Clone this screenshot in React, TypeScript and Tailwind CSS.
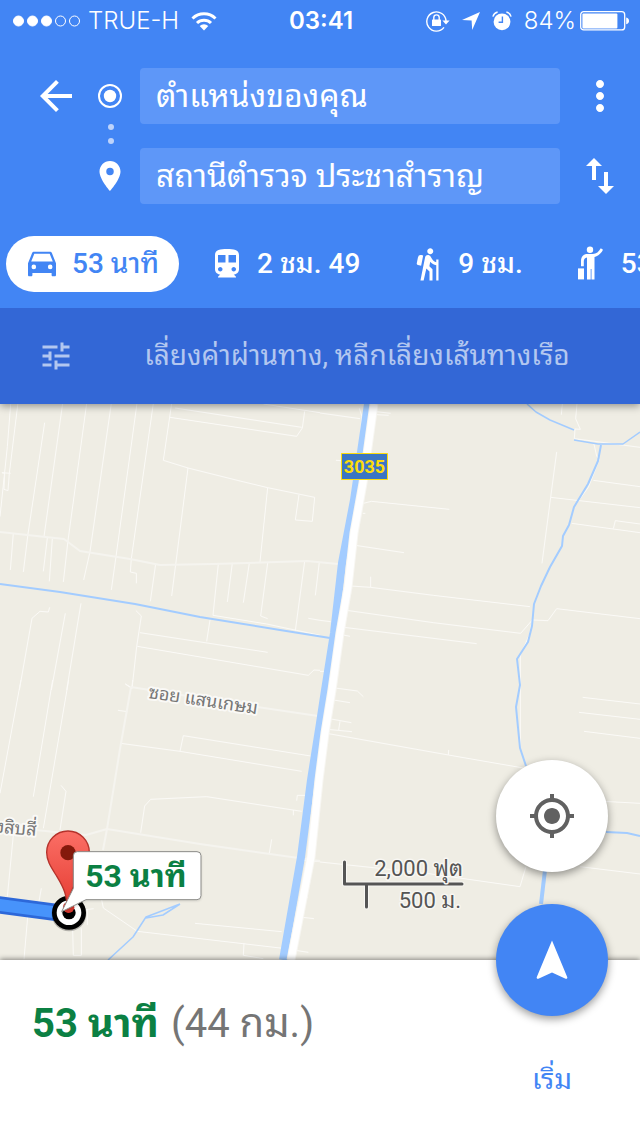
import type { ReactNode } from 'react'
import {
  MdArrowBack,
  MdDirectionsSubway,
  MdHiking,
  MdMoreVert,
  MdMyLocation,
  MdPlace,
  MdSwapVert,
  MdTune,
} from 'react-icons/md'
import { clsx } from 'clsx'

const HAIRLINES = {
  nw: [
    'M33 0L22 140 0 350',
    'M55 0L28 220 24 272 12 268 14 220 6 218 32 220',
    'M134 68L84 402 70 516',
    'M188 10L132 410',
    'M260 10L204 422 190 546',
    'M334 10L270 455 251 540',
    'M411 10L348 470 334 570',
    'M460 10L394 476 391 516 409 520 409 550',
    'M515 10L490 181 564 204 720 243 803 263 944 292 937 364 886 360 897 284',
    'M510 52L890 109 907 84 914 34',
    'M525 24L905 82',
    'M790 12L960 38',
    'M564 204L527 494 515 588',
    'M803 263L780 486',
    'M40 400L31 510',
    'M142 414L130 514',
    'M157 416L148 544',
    'M467 492L451 604',
    'M655 492L639 646 800 672 960 706',
    'M697 489L682 606',
    'M748 489L730 608',
    'M803 489L782 648 803 656',
    'M914 484L886 692',
    'M958 486L946 586',
    'M925 655L960 661',
    'M58 870L96 655 120 634 145 636 149 622',
    'M154 870L196 640',
    'M200 870L243 610',
    'M408 632L424 648 410 740 396 866 376 852',
    'M420 698L803 757',
    'M412 739L925 826 942 810 960 811',
    'M630 660L620 724',
  ],
  ne: [
    'M0 39L120 56',
    'M118 25L126 50 104 300 80 560 58 700 20 860',
    'M170 35L212 40M170 44L206 46',
    'M48 181L64 182',
    'M710 156L692 292 666 490',
    'M727 12L724 44',
    'M771 12L767 56 781 88 765 87 763 116 960 142',
    'M822 132L830 168 838 178 805 262 770 310',
    'M820 241L960 260',
    'M692 292L960 323',
    'M755 370L960 398',
    'M880 386L886 362 960 372',
    'M130 310L154 304 388 328',
    'M128 340L136 340',
    'M106 436L252 458',
    'M92 558L152 562 152 530M152 562L340 586 630 620',
    'M80 631L340 668 602 700 637 660 684 662 710 626 960 656',
    'M72 682L470 731',
    'M70 705L90 709',
    'M637 662L628 705 601 765 601 870',
    'M0 661L32 665M0 814L14 814',
  ],
  sw: [
    'M63 0L0 340',
    'M158 0L100 350',
    'M206 0L130 445',
    'M376 12L396 24 398 0',
    'M354 91L382 95',
    'M362 190L540 214 905 274',
    'M540 214L550 167 932 228',
    'M422 458L434 378 452 358 620 350 905 394M880 406L880 390',
    'M890 362L892 346 915 346',
    'M183 316L198 334 180 450',
    'M808 520L815 478',
    'M40 465L22 650',
    'M84 700L72 838',
    'M124 625L116 670',
    'M218 750L220 826 244 826 244 745',
    'M302 645L310 684 412 754 840 804 925 817',
    'M585 730L845 755',
    'M732 790L730 826 790 836',
    'M900 650L924 652M900 711L942 716',
    'M890 540L960 545',
    'M250 690L281 686M262 690L262 735',
  ],
  se: [
    'M45 24L112 33 130 50',
    'M40 60L90 68',
    'M28 116L94 128M60 124L56 150',
    'M22 148L96 155',
    'M20 160L385 225 610 264M385 225L386 210',
    'M601 0L601 208 616 252',
    'M788 52L960 72',
    'M777 97L960 118',
    'M792 154L960 175',
    'M0 546L320 580 600 620 618 560',
    'M780 560L960 582',
    'M850 364L960 370',
  ],
}

const TILES = [
  { lines: HAIRLINES.nw, transform: 'translate(0 -4) scale(.33333)' },
  { lines: HAIRLINES.ne, transform: 'translate(320 -4) scale(.33333)' },
  { lines: HAIRLINES.sw, transform: 'translate(0 276) scale(.33333)' },
  { lines: HAIRLINES.se, transform: 'translate(320 276) scale(.33333)' },
]

const HIGHWAY = 'M374 0L363 79 354 129 348 183 340 229 332 286 325 329 319 376 311 453 291 556'

function StatusBar() {
  return (
    <div className="flex h-[42px] items-center pl-3 pr-[10px] font-[Inter,sans-serif] text-2xl text-white">
      <div className="flex flex-1 items-center">
        <svg width="68" height="12" viewBox="0 0 68 12" fill="white" stroke="white">
          <circle cx="6.5" cy="6" r="5" />
          <circle cx="20.5" cy="6" r="5" />
          <circle cx="34.5" cy="6" r="5" />
          <circle cx="48.5" cy="6" r="5" fill="none" />
          <circle cx="62.5" cy="6" r="5" fill="none" />
        </svg>
        <span className="ml-2 font-light">TRUE-H</span>
        <svg className="ml-3" width="26" height="19" viewBox="0 0 26 19" fill="none" stroke="white" strokeWidth="3">
          <path d="M1.5 6.5a16.5 16.5 0 0 1 23 0M6 11a10 10 0 0 1 14 0" />
          <path d="M13 18.5l-4.3-4.4a6.2 6.2 0 0 1 8.6 0z" fill="white" stroke="none" />
        </svg>
      </div>
      <span className="font-semibold">03:41</span>
      <div className="flex flex-1 items-center justify-end">
        <svg width="24" height="22" viewBox="0 0 24 22" fill="none" stroke="white">
          <path d="M18 17.4A9.6 9.6 0 1 1 20 11" strokeWidth="1.4" />
          <path d="M16.4 10.6h7.2L20 14.6z" fill="white" stroke="none" />
          <rect x="6" y="9.4" width="9" height="6.6" rx=".6" fill="white" stroke="none" />
          <path d="M7.8 10V7.6a2.7 2.7 0 0 1 5.4 0V10" strokeWidth="1.4" />
        </svg>
        <svg className="ml-3" width="18" height="18" viewBox="0 0 18 18" fill="white">
          <path d="M18 0L0 8.1l9.6.4.6 9.5z" />
        </svg>
        <svg className="ml-3" width="20" height="20" viewBox="0 0 20 20">
          <circle cx="10" cy="10.8" r="8.4" fill="white" />
          <path d="M.9 5.6A6.5 6.5 0 0 1 5.6 1M14.4 1a6.5 6.5 0 0 1 4.7 4.6" fill="none" stroke="white" strokeWidth="1.4" />
          <path d="M10.4 5.4v5.8H6.6" fill="none" stroke="#4285f4" strokeWidth="1.4" />
        </svg>
        <span className="ml-3 font-light">84%</span>
        <svg className="ml-1" width="50" height="20" viewBox="0 0 50 20">
          <rect x=".7" y=".7" width="44" height="18.2" rx="3" fill="none" stroke="white" strokeWidth="1.3" />
          <rect x="2.4" y="2.4" width="35" height="15" rx="1" fill="white" />
          <path d="M46.2 6.4c3.8.6 3.8 6.2 0 6.8z" fill="white" />
        </svg>
      </div>
    </div>
  )
}

function WaypointField({ label, value }: { label: string; value: string }) {
  return (
    <input
      type="text"
      aria-label={label}
      defaultValue={value}
      className="h-14 w-full min-w-0 rounded bg-[#5e97f8] px-4 text-[32px] leading-[56px] text-white outline-none"
    />
  )
}

function RouteForm() {
  return (
    <form className="grid grid-cols-[48px_36px_1fr_52px] items-center gap-x-3 pl-8 pr-4 pt-[26px]">
      <button type="button" aria-label="Back">
        <MdArrowBack size={48} />
      </button>
      <svg className="mx-auto" width="24" height="24" viewBox="0 0 24 24">
        <circle cx="12" cy="12" r="11" fill="none" stroke="white" strokeWidth="2" />
        <circle cx="12" cy="12" r="6.2" fill="white" />
      </svg>
      <WaypointField label="From" value="ตำแหน่งของคุณ" />
      <button type="button" aria-label="More" className="justify-self-end">
        <MdMoreVert size={48} />
      </button>

      <svg className="col-span-3 col-start-2 ml-4" width="6" height="24" viewBox="0 0 6 24" fill="#bdd3fb">
        <circle cx="3" cy="3" r="3" />
        <circle cx="3" cy="17" r="3" />
      </svg>

      <MdPlace className="col-start-2" size={36} />
      <WaypointField label="To" value="สถานีตำรวจ ประชาสำราญ" />
      <button type="button" aria-label="Swap" className="justify-self-end">
        <MdSwapVert size={48} />
      </button>
    </form>
  )
}

function CarIcon() {
  return (
    <svg width="36" height="36" viewBox="0 0 36 36" fill="currentColor" fillRule="evenodd">
      <path d="M10.2 5.7h15.6c1 0 1.8.5 2.1 1.4L32 17.2V29c0 .8-.5 1.3-1.2 1.3h-2c-.8 0-1.2-.5-1.2-1.3v-2H8.4v2c0 .8-.4 1.3-1.2 1.3h-2c-.7 0-1.2-.5-1.2-1.3V17.2L8.1 7.1c.3-.9 1.1-1.4 2.1-1.4zM10.3 7.8L7.2 15.6h21.6l-3.1-7.8zM9.8 18.6a2.3 2.3 0 1 0 0 4.6 2.3 2.3 0 0 0 0-4.6zM26.2 18.6a2.3 2.3 0 1 0 0 4.6 2.3 2.3 0 0 0 0-4.6z" />
    </svg>
  )
}

function HailIcon() {
  return (
    <svg width="36" height="36" viewBox="0 0 36 36" fill="currentColor">
      <circle cx="17" cy="3.8" r="3.2" />
      <path d="M5 22.4h6v11H5z" />
      <path d="M8 20.2v-5c0-5 2.8-7.2 6.5-7.2h5.3c3.6 0 6-2.2 8-5.7l2.2 1.4c-1.7 3.4-4.4 6.2-8.5 7.3v22.4h-3V23h-.8v10.4H14V11.6c-2.2.3-3.2 1.6-3.2 4v4.6z" />
    </svg>
  )
}

interface ModeTabProps {
  icon: ReactNode
  label: string
  active?: boolean
}

function ModeTab({ icon, label, active }: ModeTabProps) {
  return (
    <button
      type="button"
      className={clsx(
        'flex h-14 shrink-0 items-center gap-3 whitespace-nowrap rounded-full pl-[18px] pr-5 text-[28px] font-medium leading-10',
        active ? 'bg-white text-[#4285f4]' : 'text-white',
      )}
    >
      {icon}
      <span>{label}</span>
    </button>
  )
}

function MapCanvas() {
  return (
    <svg
      className="absolute inset-0 h-full w-full"
      viewBox="0 0 640 556"
      preserveAspectRatio="xMidYMid slice"
      fill="none"
      strokeLinejoin="round"
    >
      {TILES.map(({ lines, transform }) => (
        <g key={transform} transform={transform} stroke="#fbfaf7" strokeWidth="3">
          {lines.map((d) => (
            <path key={d} d={d} />
          ))}
        </g>
      ))}

      {/* side roads */}
      <g stroke="#f5f4ef" strokeWidth="2">
        <path d="M0 128L64 135 80 147 130 155 160 161 213 160 307 157 338 160" />
        <path d="M131 283L120 345 107 425 103 446M131 283L250 302 318 312M35 426L86 431 107 425 200 440 320 457" />
      </g>

      {/* streams */}
      <g stroke="#a3ccff" strokeWidth="1.5">
        <path d="M0 180L60 188 135 200 200 213 280 226 330 234" strokeWidth="2" />
        <path d="M527 0L536 8 550 16 574 26M574 36L598 40 623 40 640 28" />
        <path d="M601 41L598 57 588 80 574 103 569 121 563 132 562 142 550 163 541 182 534 200 532 222 528 238 517 255 520 281 516 303 520 344 526 362" strokeWidth="2" />
        <path d="M606 428L627 429 640 432" strokeWidth="2" />
        <path d="M545 466L541 500" strokeWidth="4" />
        <path d="M108 556L133 533 146 513 180 500M146 514L163 511 180 500" />
      </g>

      {/* canal and highway */}
      <path
        d="M368 0L354 96 342 159 334 229 325 286 320 319 311 376 301 453 283 556"
        stroke="#a3ccff"
        strokeWidth="8"
      />
      <path d={HIGHWAY} stroke="#f8f7f3" strokeWidth="9" />
      <path d={HIGHWAY} stroke="white" strokeWidth="7" />

      <rect x="341.5" y="49.5" width="46" height="26" fill="#3b76c4" stroke="#fddc0b" />
      <text x="364.5" y="69" textAnchor="middle" fontSize="18" fontWeight="700" fill="#fddc0b">
        3035
      </text>

      <g fontSize="18" fill="#777" stroke="#faf9f6" strokeWidth="4" paintOrder="stroke">
        <text x="148" y="294" transform="rotate(8.5 148 294)">ซอย แสนเกษม</text>
        <text x="36" y="432" textAnchor="end" transform="rotate(5 36 432)">งสิบสี่</text>
      </g>

      {/* route end */}
      <g transform="translate(0 276) scale(.33333)">
        <path d="M-6 674L190 700" stroke="#2d68d9" strokeWidth="52" />
        <path d="M-6 674L190 700" stroke="#4793fb" strokeWidth="36" />
        <circle cx="207" cy="702" r="52" fill="rgba(0,0,0,.25)" />
        <circle cx="207" cy="698" r="44" fill="white" stroke="black" strokeWidth="14" />
        <circle cx="207" cy="698" r="20" fill="black" />
        <path
          d="M204 696c-5-54-10-68-33-106-18-29-31-47-31-73a64 64 0 0 1 128 0c0 26-13 44-31 73-23 38-28 52-33 106z"
          fill="url(#pin)"
          stroke="#b5322b"
          strokeWidth="4"
        />
        <circle cx="204" cy="518" r="23" fill="#84190c" />
        <circle cx="206" cy="682" r="17" fill="#d2382f" />
        <path
          d="M232 515H591a12 12 0 0 1 12 12V647a12 12 0 0 1-12 12H258L185 695 220 625V527a12 12 0 0 1 12-12z"
          fill="white"
          stroke="#8b8b88"
          strokeWidth="3"
          className="drop-shadow-md"
        />
      </g>
      <text x="136" y="483" textAnchor="middle" fontSize="32" fontWeight="700" fill="#0b8043">
        53 นาที
      </text>

      {/* scale */}
      <path d="M344.5 458V480H462M366.5 481V503" stroke="#f8f7f3" strokeWidth="5" strokeLinecap="round" />
      <path d="M344.5 458V480H462M366.5 481V503" stroke="#555" strokeWidth="3" strokeLinecap="round" />
      <g fontSize="22" fill="#555" stroke="#f8f7f3" strokeWidth="3" paintOrder="stroke" textAnchor="end">
        <text x="463" y="472">2,000 ฟุต</text>
        <text x="461" y="504">500 ม.</text>
      </g>

      <defs>
        <linearGradient id="pin" x1="0" y1="0" x2="0" y2="1">
          <stop offset="0" stopColor="#fb6f66" />
          <stop offset="1" stopColor="#e4392f" />
        </linearGradient>
      </defs>
    </svg>
  )
}

export default function App() {
  return (
    <div className="flex min-h-screen flex-col overflow-hidden bg-white font-[Roboto,'Noto_Sans_Thai_Looped','Noto_Looped_Thai',Loma,Garuda,Waree,'Noto_Sans',sans-serif]">
      <header className="relative z-10 shadow-[0_2px_8px_rgba(0,0,0,0.4)]">
        <div className="bg-[#4285f4] pb-4 text-white">
          <StatusBar />
          <RouteForm />
          <nav className="mt-8 flex gap-3 overflow-hidden pl-[6px]">
            <ModeTab active icon={<CarIcon />} label="53 นาที" />
            <ModeTab icon={<MdDirectionsSubway size={36} />} label="2 ชม. 49" />
            <ModeTab icon={<MdHiking size={36} />} label="9 ชม." />
            <ModeTab icon={<HailIcon />} label="53 นาที" />
          </nav>
        </div>
        <button type="button" className="flex h-24 w-full items-center bg-[#3367d6] pl-[38px] text-[#b3c7f0]">
          <MdTune size={36} />
          <span className="flex-1 whitespace-nowrap text-center text-[28px] leading-10">
            เลี่ยงค่าผ่านทาง, หลีกเลี่ยงเส้นทางเรือ
          </span>
        </button>
      </header>

      <main className="relative flex-1 overflow-hidden bg-[#efede4]">
        <MapCanvas />
        <button
          type="button"
          aria-label="My location"
          className="absolute bottom-[88px] right-8 flex size-28 items-center justify-center rounded-full bg-white text-[#616161] shadow-[0_3px_8px_rgba(0,0,0,0.4)]"
        >
          <MdMyLocation size={48} />
        </button>
      </main>

      <footer className="relative flex h-44 justify-between bg-white px-8 shadow-[0_-1px_5px_rgba(0,0,0,0.45)]">
        <p className="pt-8 text-[40px] leading-[64px] text-[#757575]">
          <strong className="mr-3 font-bold text-[#0b8043]">53 นาที</strong>
          (44 กม.)
        </p>
        <button type="button" className="flex w-28 flex-col items-center text-[28px] leading-10 text-[#4285f4]">
          <span className="absolute -top-14 flex size-28 items-center justify-center rounded-full bg-[#4285f4] shadow-[0_3px_8px_rgba(0,0,0,0.4)]">
            <svg width="32" height="40" viewBox="0 0 32 40" fill="white">
              <path d="M16 .6L31.2 37c.5 1.2-.4 2.2-1.6 1.7L16 32.6 2.4 38.7C1.2 39.2.3 38.2.8 37z" />
            </svg>
          </span>
          <span className="mt-[100px]">เริ่ม</span>
        </button>
      </footer>
    </div>
  )
}
